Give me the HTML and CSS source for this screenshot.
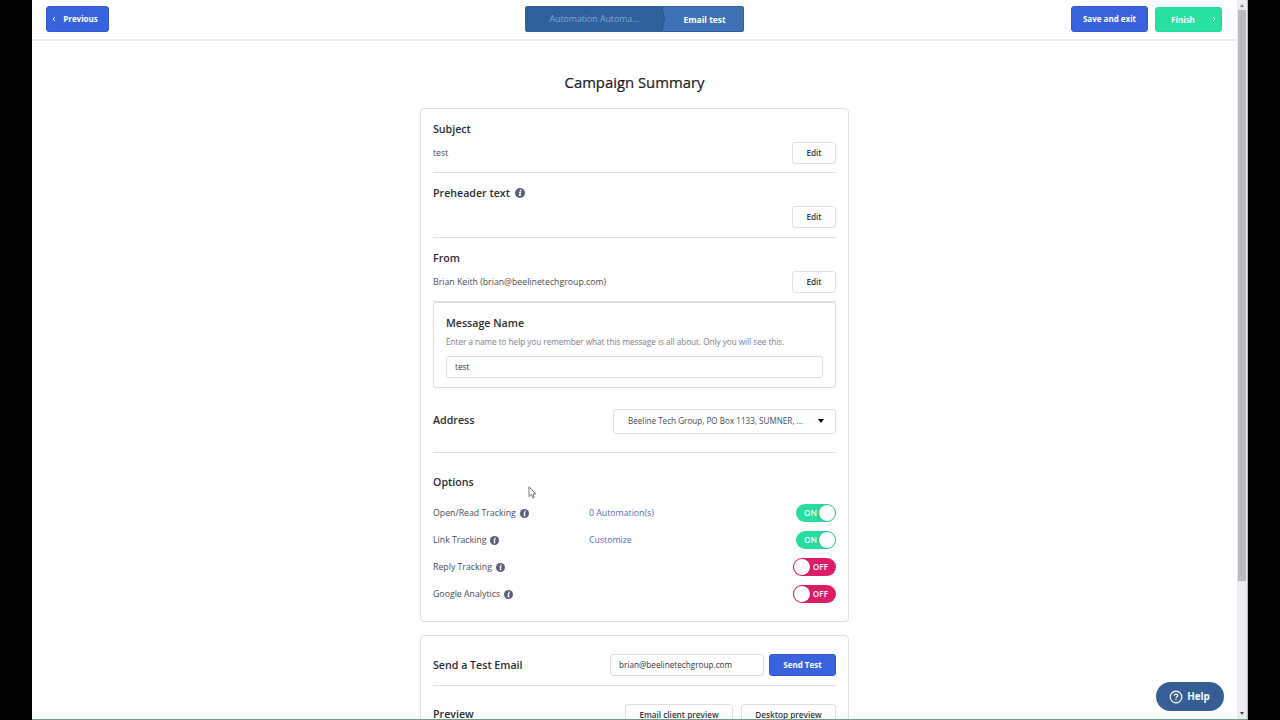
FILE: index.html
```html
<!DOCTYPE html>
<html lang="en">
<head>
  <meta charset="UTF-8" />
  <meta name="viewport" content="width=device-width, initial-scale=1.0" />
  <title>Campaign Summary</title>
  <link rel="stylesheet" href="styles.css">
</head>
<body>
  <svg class="defs" width="0" height="0">
    <symbol id="info" viewBox="0 0 20 20">
      <circle cx="10" cy="10" r="10" fill="#5b5f79" />
      <circle cx="11.2" cy="5" r="1.8" fill="#fff" />
      <path d="M8 8.6h2.7L9.4 14.8h2.4" fill="none" stroke="#fff" stroke-width="2.6" />
    </symbol>
  </svg>

  <div class="window">
    <div class="page">
      <header class="topbar">
        <div class="topbar-left">
          <button class="btn primary previous"><svg class="chevron" viewBox="0 0 4 6"><path d="M3 1L1 3l2 2" /></svg>Previous</button>
        </div>
        <nav class="breadcrumb">
          <a class="crumb">Automation Automa...</a>
          <svg class="crumb-arrow" viewBox="0 0 6 26"><path d="M0 0h1.5L4.5 13l-3 13H0z" fill="#2d609c" /><path d="M1.5 0L4.5 13l-3 13" fill="none" stroke="#25538b" /></svg>
          <a class="crumb current">Email test</a>
        </nav>
        <div class="topbar-right">
          <button class="btn primary save">Save and exit</button>
          <button class="btn primary finish">Finish<svg class="chevron" viewBox="0 0 4 6"><path d="M1 1l2 2-2 2" /></svg></button>
        </div>
      </header>

      <main class="content">
        <h1>Campaign Summary</h1>

        <div class="card summary">
          <section class="field">
            <h2>Subject</h2>
            <div class="row"><span>test</span><button class="btn edit">Edit</button></div>
          </section>
          <section class="field">
            <h2>Preheader text <svg class="info"><use href="#info" /></svg></h2>
            <div class="row"><span></span><button class="btn edit">Edit</button></div>
          </section>
          <section class="field">
            <h2>From</h2>
            <div class="row"><span>Brian Keith (brian@beelinetechgroup.com)</span><button class="btn edit">Edit</button></div>
          </section>

          <div class="message">
            <h2>Message Name</h2>
            <p>Enter a name to help you remember what this message is all about. Only you will see this.</p>
            <input type="text" class="input" value="test" />
          </div>

          <div class="address">
            <h2>Address</h2>
            <div class="select"><span>Beeline Tech Group, PO Box 1133, SUMNER, ...</span><i class="caret"></i></div>
          </div>

          <div class="options">
            <h2>Options</h2>
            <div class="option">
              <span class="label">Open/Read Tracking <svg class="info"><use href="#info" /></svg></span>
              <a class="link">0 Automation(s)</a>
              <div class="toggle on"><span>ON</span><i class="knob"></i></div>
            </div>
            <div class="option">
              <span class="label">Link Tracking <svg class="info"><use href="#info" /></svg></span>
              <a class="link">Customize</a>
              <div class="toggle on"><span>ON</span><i class="knob"></i></div>
            </div>
            <div class="option">
              <span class="label">Reply Tracking <svg class="info"><use href="#info" /></svg></span>
              <div class="toggle off"><i class="knob"></i><span>OFF</span></div>
            </div>
            <div class="option">
              <span class="label">Google Analytics <svg class="info"><use href="#info" /></svg></span>
              <div class="toggle off"><i class="knob"></i><span>OFF</span></div>
            </div>
          </div>
        </div>

        <div class="card test">
          <div class="send">
            <h2>Send a Test Email</h2>
            <input type="text" class="input" value="brian@beelinetechgroup.com" />
            <button class="btn primary">Send Test</button>
          </div>
          <div class="preview">
            <h2>Preview</h2>
            <button class="btn client">Email client preview</button>
            <button class="btn desktop">Desktop preview</button>
          </div>
        </div>
      </main>
    </div>

    <div class="scrollbar">
      <i class="arrow up"></i>
      <div class="thumb"></div>
      <i class="arrow down"></i>
    </div>
  </div>

  <button class="help">
    <svg viewBox="0 0 14 14"><circle cx="7" cy="7" r="5.8" /><path d="M5.2 5.6C5.3 3.5 8.8 3.6 8.7 5.6 8.6 6.8 7 6.7 7 8.2M7 9.3v1.2" /></svg>
    Help
  </button>
  <svg class="cursor" viewBox="0 0 9 13"><path d="M1 .8v9.8l2.3-2.1 1.5 3.4 1.5-.7-1.5-3.2h3z" /></svg>
</body>
</html>
```
FILE: styles.css
```css
* {
  box-sizing: border-box;
}
body {
  margin: 0;
  height: 720px;
  overflow: hidden;
  background: #000;
  color: #4a4c55;
  font-family: 'Open Sans', 'Noto Sans', sans-serif;
  font-size: 8.75px;
}
h1, h2, p {
  margin: 0;
}
h1 {
  height: 67px;
  padding-top: 30px;
  font-size: 14.85px;
  line-height: 22px;
  font-weight: 500;
  text-align: center;
  color: #17181c;
  -webkit-text-stroke: .2px #17181c;
}
h2 {
  display: flex;
  align-items: center;
  font-size: 10.65px;
  line-height: 16px;
  font-weight: 600;
  color: #2b2d34;
}
.defs {
  position: absolute;
}
.window {
  display: flex;
  height: 720px;
  margin: 0 32px;
  background: #fff;
  border-right: 1px solid #9fbdd2;
  border-bottom: 1px solid #6f9e87;
  overflow: hidden;
}
.page {
  flex: 1;
  overflow: hidden;
}

/* top bar */
.topbar {
  display: grid;
  grid-template-columns: 1fr 219px 1fr;
  align-items: start;
  height: 41px;
  padding: 6px 15px 0 14px;
  border-bottom: 2px solid #ececee;
}
.topbar-right {
  display: flex;
  justify-content: flex-end;
  gap: 7px;
}
.btn {
  display: flex;
  align-items: center;
  justify-content: center;
  height: 22px;
  padding: 0 0 1px;
  border: 1px solid #dfe0e3;
  border-radius: 3px;
  background: #fff;
  color: #33353c;
  font-family: inherit;
  font-size: 8.2px;
  font-weight: 600;
  white-space: nowrap;
}
.topbar .btn {
  height: 26px;
}
.btn.primary {
  background: #3962de;
  border-color: #3459cf;
  color: #fff;
  font-size: 8px;
  font-weight: 700;
}
.topbar .btn.finish {
  width: 67px;
  height: 25px;
  margin-top: 1px;
  gap: 17px;
  padding-left: 10px;
  background: #28e0a2;
  border-color: #28d79c;
}
.btn.previous {
  width: 63px;
  gap: 7px;
  padding-right: 5px;
}
.btn.save {
  width: 77px;
}
.chevron {
  width: 4px;
  height: 6px;
  fill: none;
  stroke: #fff;
}
.breadcrumb {
  display: flex;
  height: 26px;
  border: 1px solid #2f5f9c;
  border-radius: 2px;
  background: #3f72b4;
  line-height: 25px;
  overflow: hidden;
}
.crumb {
  width: 134px;
  padding-left: 24px;
  background: #2d609c;
  color: #84acd9;
}
.crumb.current {
  width: auto;
  padding-left: 18px;
  background: none;
  color: #fff;
  font-size: 8.5px;
  font-weight: 700;
}
.crumb-arrow {
  width: 6px;
  height: 26px;
  margin-top: -1px;
}

/* cards */
.content {
  width: 429px;
  margin: 0 auto;
}
.card {
  padding: 0 12px;
  border: 1px solid #dfe0e2;
  border-radius: 4px;
}
.summary {
  height: 514px;
  margin-bottom: 13px;
}
.field {
  height: 64.4px;
  padding-top: 12px;
  border-bottom: 1px solid #dfe0e2;
}
.row {
  display: flex;
  justify-content: space-between;
  align-items: center;
  margin-top: 5px;
}
.edit {
  width: 44px;
}
.info {
  width: 10px;
  height: 10px;
  margin-left: 5px;
}
.message {
  height: 86px;
  padding: 12px;
  border: 1px solid #dcdddf;
  border-radius: 3px;
}
.message p {
  margin: 4px 0 7px;
  font-size: 8.15px;
  line-height: 14px;
  color: #7b7d8a;
}
.input {
  display: block;
  width: 100%;
  height: 22px;
  padding: 0 8px 1px;
  border: 1px solid #dcdde0;
  border-radius: 3px;
  color: #33353c;
  font-family: inherit;
  font-size: 8.2px;
}
.address {
  display: flex;
  justify-content: space-between;
  height: 65px;
  padding-top: 21px;
  border-bottom: 1px solid #dfe0e2;
}
.address h2 {
  height: 22px;
}
.select {
  display: flex;
  justify-content: space-between;
  align-items: center;
  width: 223px;
  height: 25px;
  padding: 0 11px 2px 14px;
  border: 1px solid #dcdde0;
  border-radius: 3px;
  font-size: 8.13px;
}
.caret {
  border: 3.5px solid transparent;
  border-top: 4px solid #000;
  border-bottom: 0;
}
.options {
  padding-top: 21px;
}
.options h2 {
  margin-bottom: 9.5px;
}
.option {
  display: flex;
  align-items: center;
  height: 27px;
}
.label {
  display: flex;
  align-items: center;
  width: 156px;
}
.option .info {
  width: 9px;
  height: 9px;
  margin-left: 4px;
}
.link {
  color: #5a68c8;
}
.toggle {
  display: flex;
  align-items: center;
  justify-content: space-between;
  width: 40px;
  height: 18px;
  margin-left: auto;
  padding: 0 1px 0 8px;
  border-radius: 9px;
  background: #28dd9f;
  color: #fff;
  font-size: 8.2px;
  font-weight: 600;
}
.toggle span {
  padding-bottom: 1px;
}
.toggle.off {
  width: 43px;
  padding: 0 8px 0 1px;
  background: #de1b68;
}
.knob {
  width: 16px;
  height: 16px;
  border-radius: 50%;
  background: #fff;
  box-shadow: 0 0 2px rgba(0,0,0,0.3);
}
.test {
  height: 160px;
}
.send {
  display: flex;
  align-items: center;
  height: 50px;
  padding-top: 8px;
  border-bottom: 1px solid #dfe0e2;
}
.send h2, .preview h2 {
  flex: 1;
}
.send .input {
  width: 154px;
}
.send .btn {
  width: 67px;
  margin-left: 5px;
}
.preview {
  display: flex;
  align-items: center;
  gap: 8px;
  padding-top: 18px;
}
.preview h2 {
  padding-bottom: 2px;
}
.client {
  width: 108px;
}
.desktop {
  width: 95px;
}

/* scrollbar */
.scrollbar {
  display: flex;
  flex-direction: column;
  align-items: center;
  justify-content: space-between;
  width: 10px;
  padding: 4px 0 4px;
  background: #ebedf1;
}
.thumb {
  width: 8px;
  height: 571px;
  margin: 3px 0 auto;
  background: #b9bbbf;
}
.arrow {
  border: 2px solid transparent;
}
.arrow.up {
  border-top: 0;
  border-bottom: 3px solid #85878c;
}
.arrow.down {
  border-bottom: 0;
  border-top: 3px solid #44464a;
}

.help {
  position: absolute;
  right: 56px;
  bottom: 9px;
  display: flex;
  align-items: center;
  justify-content: center;
  gap: 4px;
  width: 68px;
  height: 29px;
  padding: 0 1px 0 0;
  border: 0;
  border-radius: 15px;
  background: #355f94;
  color: #fff;
  font-family: inherit;
  font-size: 9.8px;
  font-weight: 700;
}
.help svg {
  width: 14px;
  height: 14px;
  fill: none;
  stroke: #fff;
  stroke-width: 1.2;
}
.cursor {
  position: absolute;
  left: 528px;
  top: 486px;
  width: 9px;
  height: 13px;
  fill: #fff;
  stroke: #55565a;
  stroke-width: .8;
}
```
